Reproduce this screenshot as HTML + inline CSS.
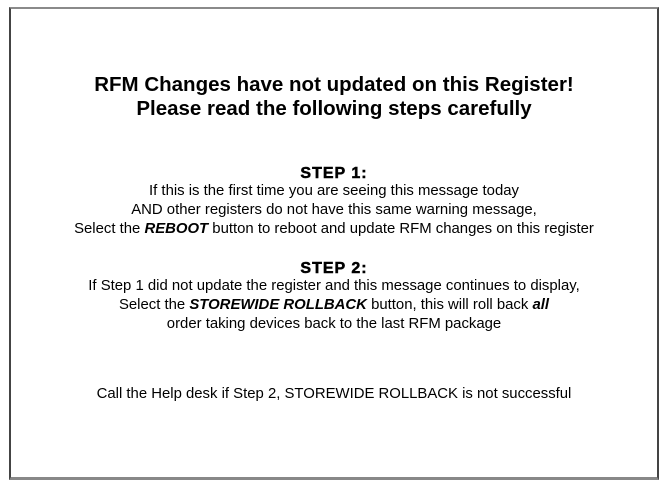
<!DOCTYPE html>
<html><head><style>
html,body{margin:0;padding:0;background:#fff;width:668px;height:488px;overflow:hidden}
.box{position:absolute;left:9px;top:7px;width:646px;height:468px;border-top:2px solid #8a8a8a;border-left:2px solid #444;border-right:2px solid #444;border-bottom:3px solid #888;}
.t{position:absolute;left:0;width:668px;text-align:center;font-family:"Liberation Sans",sans-serif;color:#000;white-space:nowrap}
.h{font-size:20.5px;font-weight:bold}
.s{font-size:16px;font-weight:900;letter-spacing:1px;-webkit-text-stroke:0.5px #000}
.p{font-size:14.9px}
</style></head><body>
<div class="box"></div>
<div class="t h" style="top:73px">RFM Changes have not updated on this Register!</div>
<div class="t h" style="top:97px">Please read the following steps carefully</div>
<div class="t s" style="top:165px">STEP 1:</div>
<div class="t p" style="top:183px">If this is the first time you are seeing this message today</div>
<div class="t p" style="top:202px">AND other registers do not have this same warning message,</div>
<div class="t p" style="top:221px">Select the <b><i>REBOOT</i></b> button to reboot and update RFM changes on this register</div>
<div class="t s" style="top:260px">STEP 2:</div>
<div class="t p" style="top:278px">If Step 1 did not update the register and this message continues to display,</div>
<div class="t p" style="top:297px">Select the <b><i>STOREWIDE ROLLBACK</i></b> button, this will roll back <b><i>all</i></b></div>
<div class="t p" style="top:316px">order taking devices back to the last RFM package</div>
<div class="t p" style="top:386px">Call the Help desk if Step 2, STOREWIDE ROLLBACK is not successful</div>
</body></html>
